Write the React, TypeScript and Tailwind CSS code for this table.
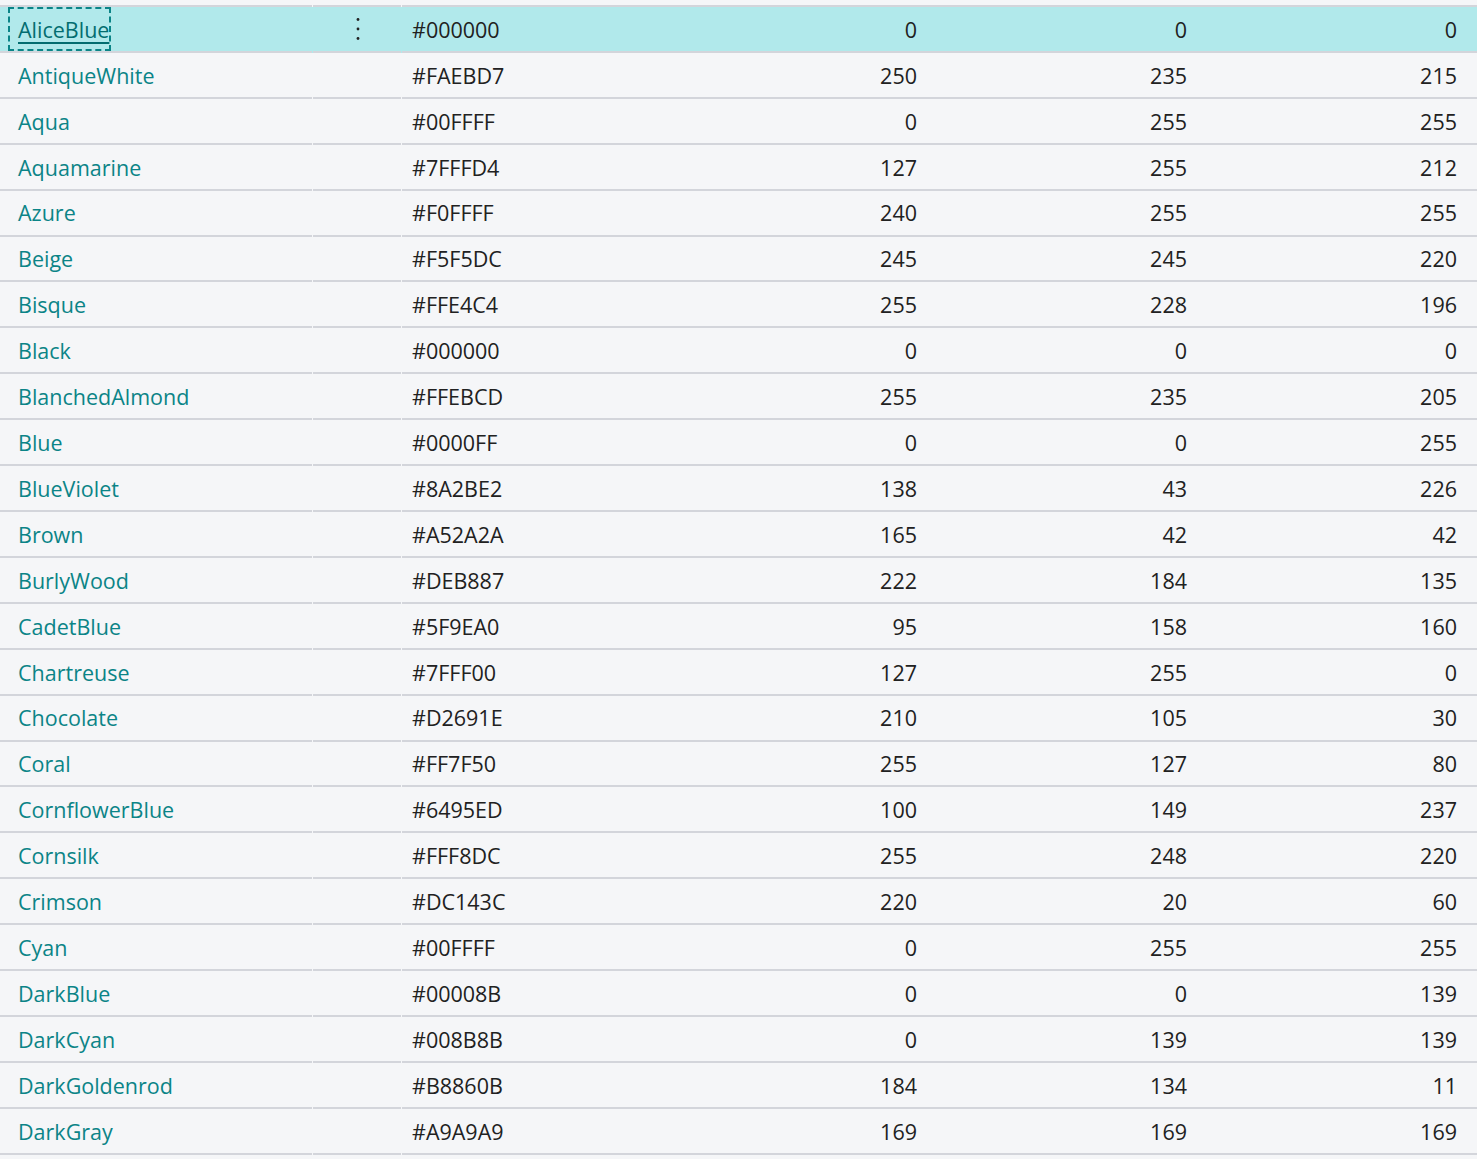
const colors: [string, string, number, number, number][] = [
  ['AliceBlue', '#000000', 0, 0, 0],
  ['AntiqueWhite', '#FAEBD7', 250, 235, 215],
  ['Aqua', '#00FFFF', 0, 255, 255],
  ['Aquamarine', '#7FFFD4', 127, 255, 212],
  ['Azure', '#F0FFFF', 240, 255, 255],
  ['Beige', '#F5F5DC', 245, 245, 220],
  ['Bisque', '#FFE4C4', 255, 228, 196],
  ['Black', '#000000', 0, 0, 0],
  ['BlanchedAlmond', '#FFEBCD', 255, 235, 205],
  ['Blue', '#0000FF', 0, 0, 255],
  ['BlueViolet', '#8A2BE2', 138, 43, 226],
  ['Brown', '#A52A2A', 165, 42, 42],
  ['BurlyWood', '#DEB887', 222, 184, 135],
  ['CadetBlue', '#5F9EA0', 95, 158, 160],
  ['Chartreuse', '#7FFF00', 127, 255, 0],
  ['Chocolate', '#D2691E', 210, 105, 30],
  ['Coral', '#FF7F50', 255, 127, 80],
  ['CornflowerBlue', '#6495ED', 100, 149, 237],
  ['Cornsilk', '#FFF8DC', 255, 248, 220],
  ['Crimson', '#DC143C', 220, 20, 60],
  ['Cyan', '#00FFFF', 0, 255, 255],
  ['DarkBlue', '#00008B', 0, 0, 139],
  ['DarkCyan', '#008B8B', 0, 139, 139],
  ['DarkGoldenrod', '#B8860B', 184, 134, 11],
  ['DarkGray', '#A9A9A9', 169, 169, 169],
];

// three-dot "more" button shown on the focused row
const MoreDots = () => (
  <svg width="6" height="24" viewBox="0 0 6 24" className="ml-[42px]">
    <circle cx="3" cy="2.5" r="1.4" fill="#222" />
    <circle cx="3" cy="12" r="1.4" fill="#222" />
    <circle cx="3" cy="21.5" r="1.4" fill="#222" />
  </svg>
);

const App = () => {
  return (
    <div
      className="min-h-screen bg-[#f5f6f8] text-[21.5px] text-[#212121] overflow-hidden"
      style={{ fontFamily: '"Open Sans", "Noto Sans", sans-serif' }}
    >
      {/* tail of the row above */}
      <div className="flex h-[7px] gap-px">
        <div className="w-[312px] border-b-2 border-[#d3d5db]" />
        <div className="w-[88px] border-b-2 border-[#d3d5db]" />
        <div className="flex-1 border-b-2 border-[#d3d5db]" />
      </div>

      {colors.map(([name, hex, r, g, b], i) => {
        const selected = i === 0;
        return (
          <div key={name} className={`flex h-[45.92px] gap-px ${selected ? 'bg-[#b1e9eb]' : ''}`}>
            {/* name */}
            <div className="w-[312px] flex items-center border-b-2 border-[#d3d5db]">
              {selected ? (
                <span className="ml-[8px] flex h-[44px] items-center pt-[2px] pl-[10px] pr-[2px] outline-2 outline-dashed outline-[#0b8487] -outline-offset-2">
                  <span className="text-[#036d70] underline underline-offset-[4px] decoration-[1.5px]">{name}</span>
                </span>
              ) : (
                <span className="pl-[18px] pt-[2px] text-[#0b8487]">{name}</span>
              )}
            </div>

            {/* row actions */}
            <div className="w-[88px] flex items-center border-b-2 border-[#d3d5db]">
              {selected && <MoreDots />}
            </div>

            {/* values */}
            <div className="flex-1 flex items-center pt-[2px] border-b-2 border-[#d3d5db]">
              <span className="flex-1 pl-[10px]">{hex}</span>
              <span className="w-[270px] pr-[20px] text-right">{r}</span>
              <span className="w-[270px] pr-[20px] text-right">{g}</span>
              <span className="w-[270px] pr-[20px] text-right">{b}</span>
            </div>
          </div>
        );
      })}
    </div>
  );
};

export default App;
